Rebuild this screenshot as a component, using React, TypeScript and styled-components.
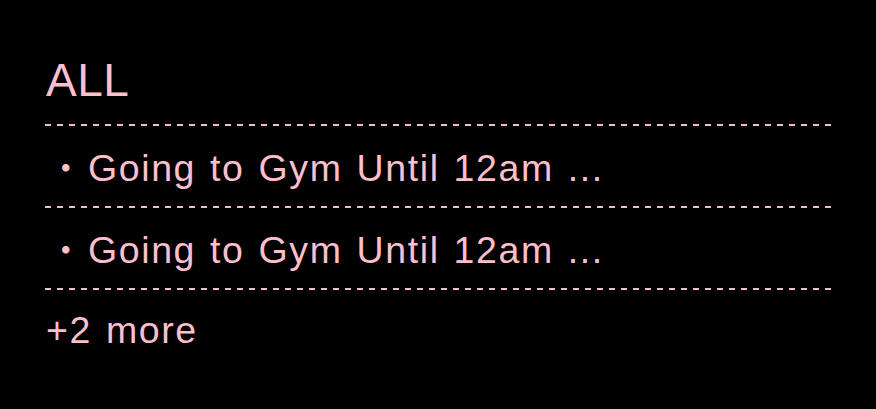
import React from 'react';
import styled, { createGlobalStyle } from 'styled-components';

const GlobalStyle = createGlobalStyle`
    html, body {
        margin: 0;
        padding: 0;
        background: #000;
    }
    body {
        font-family: "Liberation Sans", "Noto Sans CJK JP", Arial, sans-serif;
    }
`;

const Panel = styled.div`
    width: 876px;
    height: 409px;
    box-sizing: border-box;
    padding: 57px 45px 0 45px;
    background: #000;
    color: #fcbfcc;
    overflow: hidden;
`;

const Title = styled.div`
    font-size: 46px;
    line-height: 46px;
    height: 46px;
    padding-left: 1px;
    letter-spacing: 0.5px;
    margin-bottom: 21px;
`;

const Divider = styled.div`
    height: 2px;
    background: repeating-linear-gradient(
        to right,
        #e9bfca 0,
        #e9bfca 6px,
        transparent 6px,
        transparent 12px
    );
`;

const List = styled.ul`
    list-style: none;
    margin: 0;
    padding: 0;
`;

const Row = styled.li`
    display: flex;
    align-items: baseline;
    height: 80px;
    line-height: 80px;
    font-size: 37.5px;
    letter-spacing: 1.6px;
    word-spacing: 2px;
    white-space: nowrap;
`;

const Bullet = styled.span`
    width: 43px;
    flex-shrink: 0;
    text-align: center;
    font-family: "Noto Sans CJK JP", sans-serif;
    font-size: 35px;
`;

const More = styled.div`
    height: 80px;
    line-height: 80px;
    font-size: 37.5px;
    letter-spacing: 1.6px;
    word-spacing: 2px;
    padding-left: 1px;
`;

interface Task {
    id: number;
    title: string;
}

const tasks: Task[] = [
    { id: 1, title: 'Going to Gym Until 12am ...' },
    { id: 2, title: 'Going to Gym Until 12am ...' },
];

const App: React.FC = () => {
    return (
        <>
            <GlobalStyle />
            <Panel>
                <Title>ALL</Title>
                <List>
                    {tasks.map((task) => (
                        <React.Fragment key={task.id}>
                            <Divider />
                            <Row>
                                <Bullet>・</Bullet>
                                <span>{task.title}</span>
                            </Row>
                        </React.Fragment>
                    ))}
                </List>
                <Divider />
                <More>+2 more</More>
            </Panel>
        </>
    );
};

export default App;
